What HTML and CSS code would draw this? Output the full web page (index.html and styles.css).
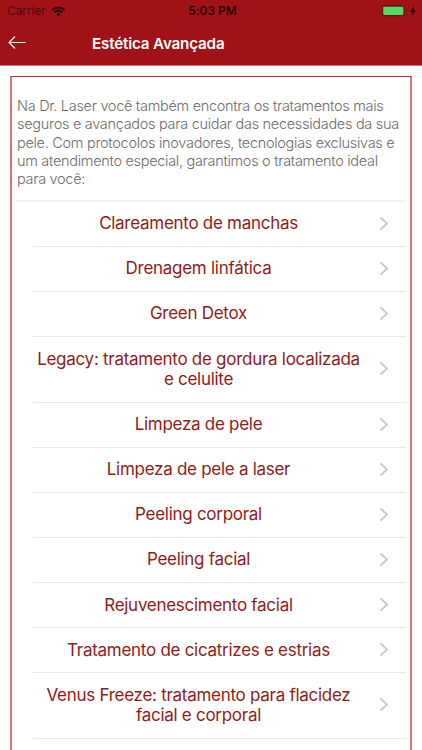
FILE: index.html
```html
<!DOCTYPE html>
<html lang="pt-BR">
<head>
<meta charset="utf-8">
<title>Estética Avançada</title>
<link rel="stylesheet" href="styles.css">
</head>
<body>
<svg class="defs" width="0" height="0" aria-hidden="true">
  <symbol id="chevron" viewBox="0 0 10 16"><path d="M1.500 1.300 8 7.500l-6.500 6.200" fill="none" stroke="currentColor" stroke-width="1.800"/></symbol>
</svg>
<header class="header">
  <div class="status">
    <span class="carrier">Carrier</span>
    <svg class="wifi" width="15" height="11" viewBox="0 0 15 11">
      <path d="M1.300 4.100a8.800 8.800 0 0 1 12.400 0M3.500 6.400a5.700 5.700 0 0 1 8 0" fill="none" stroke="currentColor" stroke-width="1.900"/>
      <path d="M5.200 8.200a3.300 3.300 0 0 1 4.600 0L7.500 10.500z" fill="currentColor"/>
    </svg>
    <span class="time">5:03 PM</span>
    <svg class="battery" width="36" height="12" viewBox="0 0 36 12">
      <rect x=".3" y=".8" width="22" height="10" rx="2" fill="none" stroke="#650a0d" stroke-width="1"/>
      <rect x="1.200" y="1.700" width="20.200" height="8.200" rx=".8" fill="#4cd964"/>
      <path d="M24 4.200q1.300 1.600 0 3.200z" fill="#650a0d"/>
      <path d="M32 1 28.200 6.500h2.300L29.800 11l3.900-5.700h-2.300z" fill="#240304"/>
    </svg>
  </div>
  <nav class="nav">
    <svg class="back" width="18" height="14" viewBox="0 0 18 14"><path d="M17.500 6.500H1M7 .5 1 6.500l6 6" fill="none" stroke="currentColor" stroke-width="1.100"/></svg>
    <h1 class="title">Estética Avançada</h1>
  </nav>
</header>
<main class="card">
  <p class="intro">Na Dr. Laser você também encontra os tratamentos mais<br>seguros e avançados para cuidar das necessidades da sua<br>pele. Com protocolos inovadores, tecnologias exclusivas e<br>um atendimento especial, garantimos o tratamento ideal<br>para você:</p>
  <ul class="list">
    <li class="row"><span class="label">Clareamento de manchas</span><svg class="chev"><use href="#chevron"/></svg></li>
    <li class="row"><span class="label">Drenagem linfática</span><svg class="chev"><use href="#chevron"/></svg></li>
    <li class="row"><span class="label">Green Detox</span><svg class="chev"><use href="#chevron"/></svg></li>
    <li class="row tall"><span class="label">Legacy: tratamento de gordura localizada<br>e celulite</span><svg class="chev"><use href="#chevron"/></svg></li>
    <li class="row"><span class="label">Limpeza de pele</span><svg class="chev"><use href="#chevron"/></svg></li>
    <li class="row"><span class="label">Limpeza de pele a laser</span><svg class="chev"><use href="#chevron"/></svg></li>
    <li class="row"><span class="label">Peeling corporal</span><svg class="chev"><use href="#chevron"/></svg></li>
    <li class="row"><span class="label">Peeling facial</span><svg class="chev"><use href="#chevron"/></svg></li>
    <li class="row"><span class="label">Rejuvenescimento facial</span><svg class="chev"><use href="#chevron"/></svg></li>
    <li class="row"><span class="label">Tratamento de cicatrizes e estrias</span><svg class="chev"><use href="#chevron"/></svg></li>
    <li class="row tall"><span class="label">Venus Freeze: tratamento para flacidez<br>facial e corporal</span><svg class="chev"><use href="#chevron"/></svg></li>
  </ul>
</main>
</body>
</html>
```
FILE: styles.css
```css
* { box-sizing: border-box; }
html, body { height: 100%; margin: 0; }
body {
  display: flex;
  flex-direction: column;
  overflow: hidden;
  background: #fff;
  font-family: Inter, "Liberation Sans", sans-serif;
}
.defs { position: absolute; }
.header {
  flex: none;
  height: 66px;
  background: #a11217;
  border-bottom: 1px solid #d9777c;
}
.status {
  display: grid;
  grid-template-columns: 44px 1fr 36px;
  align-items: center;
  height: 22px;
  padding: 0 4px 0 7px;
  color: #240304;
  font-size: 12px;
  line-height: 22px;
  position: relative;
}
.carrier { color: #4b080b; letter-spacing: -.1px; }
.time {
  position: absolute;
  left: 3px;
  right: 0;
  text-align: center;
  font-size: 11.800px;
  font-weight: 600;
  letter-spacing: .1px;
}
.nav { display: flex; align-items: center; height: 42px; padding-left: 8px; color: #fff; }
.back { flex: none; }
.title {
  margin: 1px 0 0 66px;
  font-size: 15.200px;
  font-weight: 600;
  line-height: 20px;
  letter-spacing: -.17px;
}
.card {
  flex: 1;
  min-height: 0;
  width: 402px;
  margin: 10px 0 0 10px;
  padding: 20px 4px 0;
  border: solid #c9777b;
  border-width: 1px 2px 0;
  border-top-color: #a8373c;
  overflow: hidden;
}
.intro {
  margin: 0;
  height: 103px;
  padding-left: 1px;
  color: #6c6c6c;
  font-size: 14.500px;
  font-weight: 300;
  line-height: 18.300px;
  letter-spacing: -.3px;
  white-space: nowrap;
}
.list { margin: 0; padding: 0; list-style: none; border-top: 2px solid #f3f3f3; }
.row {
  display: flex;
  align-items: center;
  height: 45.070px;
  margin-left: 17px;
  padding: 0 17px 1px 0;
  border-bottom: 1px solid #e8e8ea;
}
.tall { height: 65.800px; }
.label {
  width: 331px;
  color: #901a20;
  font-size: 17px;
  line-height: 20.500px;
  letter-spacing: -.28px;
  text-align: center;
  white-space: nowrap;
}
.chev { flex: none; width: 10px; height: 16px; margin-left: auto; color: #c7c7cc; }
```
